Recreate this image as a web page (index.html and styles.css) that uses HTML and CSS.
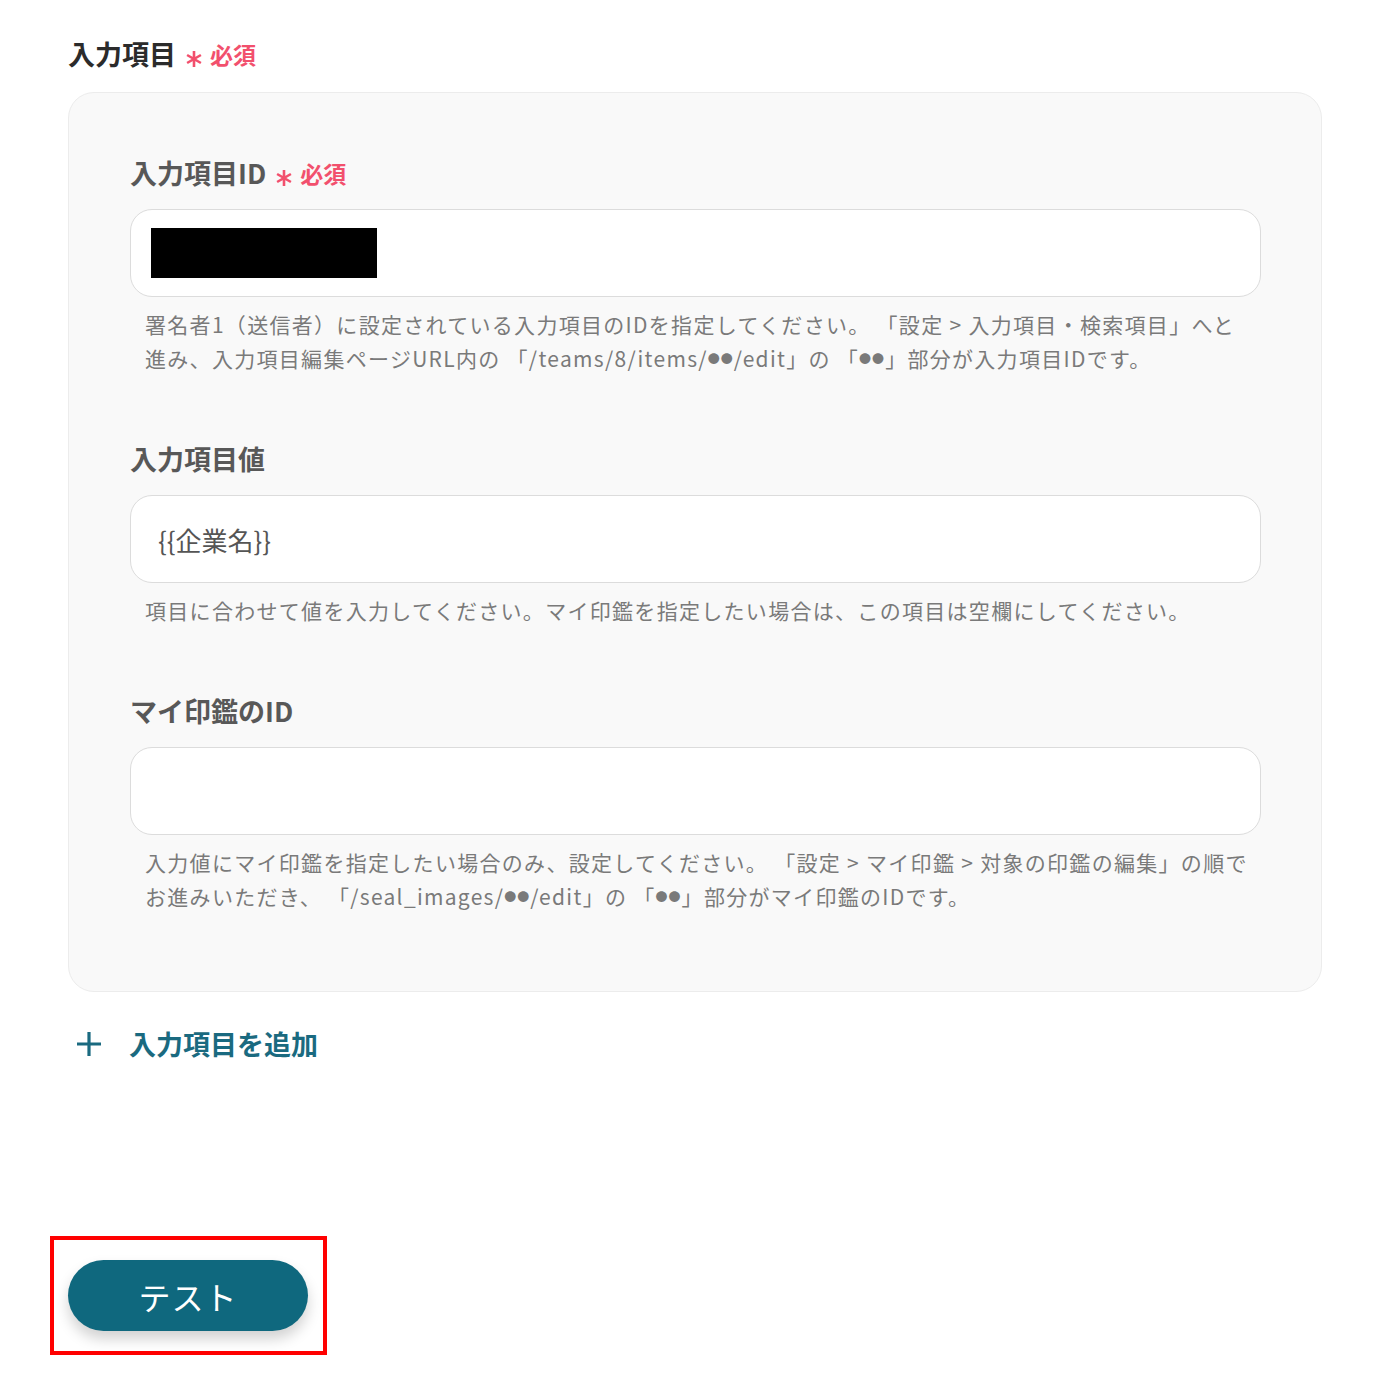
FILE: index.html
```html
<!DOCTYPE html>
<html lang="ja">
<head>
<meta charset="utf-8">
<link rel="stylesheet" href="styles.css">
</head>
<body>
<div class="page">
  <h2 class="section-title">入力項目<span class="req"><svg class="star" width="18" height="18" viewBox="0 0 18 18"><path d="M9 1v16M2.1 5l13.8 8M2.1 13l13.8-8" stroke="currentColor" stroke-width="2.6" fill="none"/></svg>必須</span></h2>
  <div class="card">
    <div class="field">
      <div class="label">入力項目ID<span class="req"><svg class="star" width="18" height="18" viewBox="0 0 18 18"><path d="M9 1v16M2.1 5l13.8 8M2.1 13l13.8-8" stroke="currentColor" stroke-width="2.6" fill="none"/></svg>必須</span></div>
      <div class="input"><span class="redact"></span></div>
      <p class="help">署名者1（送信者）に設定されている入力項目のIDを指定してください。 「設定 &gt; 入力項目・検索項目」へと進み、入力項目編集ページURL内の 「/teams/8/items/<span class="dots">●●</span>/edit」の 「<span class="dots">●●</span>」部分が入力項目IDです。</p>
    </div>
    <div class="field">
      <div class="label">入力項目値</div>
      <div class="input"><span class="value">{{企業名}}</span></div>
      <p class="help">項目に合わせて値を入力してください。マイ印鑑を指定したい場合は、この項目は空欄にしてください。</p>
    </div>
    <div class="field">
      <div class="label">マイ印鑑のID</div>
      <div class="input"></div>
      <p class="help">入力値にマイ印鑑を指定したい場合のみ、設定してください。 「設定 &gt; マイ印鑑 &gt; 対象の印鑑の編集」の順でお進みいただき、 「/seal_images/<span class="dots">●●</span>/edit」の 「<span class="dots">●●</span>」部分がマイ印鑑のIDです。</p>
    </div>
  </div>
  <div class="add">
    <svg class="plus" width="28" height="28" viewBox="0 0 28 28"><path d="M14 2v24M2 14h24" stroke="currentColor" stroke-width="3.2" fill="none"/></svg>
    <span>入力項目を追加</span>
  </div>
  <div class="test-wrap">
    <button class="test-btn">テスト</button>
  </div>
</div>
</body>
</html>
```
FILE: styles.css
```css
html, body { margin: 0; padding: 0; background: #fff; }
body { font-family: "Noto Sans CJK JP", "Noto Sans", sans-serif; color: #333; }
.page { padding: 34px 61px 0 68px; }
.section-title {
  margin: 0; font-size: 27px; font-weight: 700; color: #2b2b2b;
  line-height: 40px; display: flex; align-items: center;
}
.req { color: #f2506d; font-size: 23px; font-weight: 700; margin-left: 9px; display: inline-flex; align-items: center; }
.star { display: block; margin-right: 7px; position: relative; top: 5px; }
.card {
  margin-top: 18px; background: #f9f9f9; border: 1.5px solid #ececec;
  border-radius: 26px; padding: 62px 60px 62px 61px; height: 900px; box-sizing: border-box;
}
.field + .field { margin-top: 66px; }
.label { font-size: 27px; font-weight: 700; color: #585858; line-height: 36px; display: flex; align-items: center; }
.label .req { margin-left: 9px; }
.input {
  margin-top: 18px; height: 88px; box-sizing: border-box; background: #fff;
  border: 1.5px solid #dcdcdc; border-radius: 22px; display: flex; align-items: center; padding-left: 20px;
}
.redact { display: block; width: 226px; height: 50px; background: #000; }
.value { font-size: 26px; color: #555; padding-left: 7px; }
.help { margin: 10px 6px 0 15px; font-size: 21px; line-height: 34px; color: #7a7a7a; letter-spacing: 1.3px; }
.dots { font-size: 12px; line-height: 0; letter-spacing: 1px; position: relative; top: -3px; }
.add { display: flex; align-items: center; gap: 26px; color: #1a6a80; font-size: 27px; font-weight: 700; margin-top: 32px; padding-left: 7px; }
.plus { display: block; }
.test-wrap {
  margin-top: 173px; margin-left: -18px; width: 277px; height: 119px; box-sizing: border-box;
  border: 4px solid #ff0000; display: flex; align-items: center; padding-left: 14px;
}
.test-btn {
  width: 240px; height: 71px; border: none; border-radius: 36px; background: #0f687e;
  color: #fff; font-family: inherit; font-size: 32px; box-shadow: 0 8px 14px rgba(0,0,0,0.18); letter-spacing: 1px;
}
```
